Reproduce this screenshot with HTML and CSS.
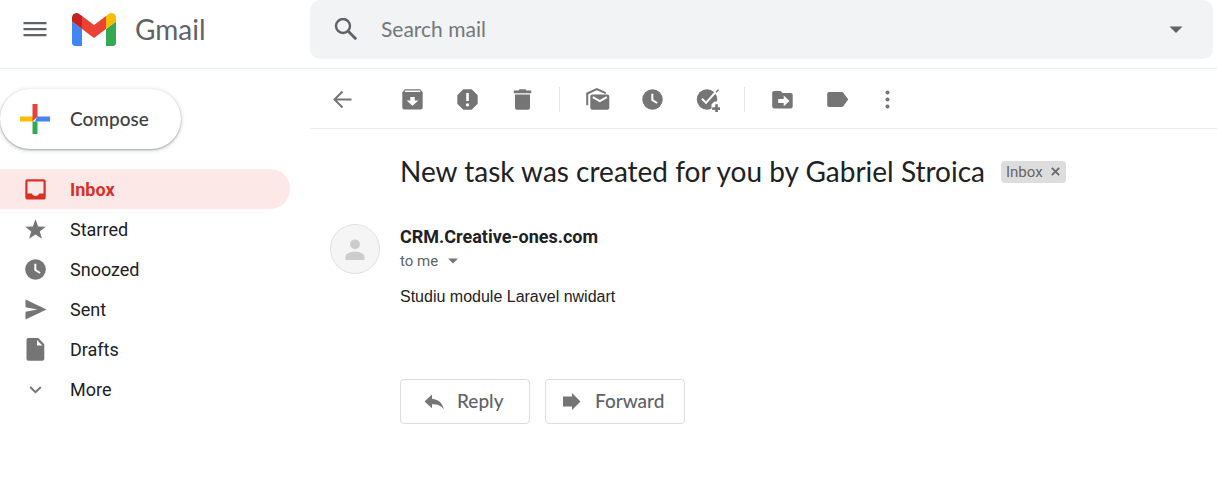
FILE: index.html
```html
<!DOCTYPE html>
<html lang="en">
<head>
  <meta charset="UTF-8" />
  <meta name="viewport" content="width=device-width, initial-scale=1.0"/>
  <title>Gmail</title>
  <link rel="stylesheet" href="styles.css">
</head>
<body>

  <header class="header">
    <div class="brand">
      <button class="menu-btn" aria-label="Main menu">
        <svg width="24" height="15" viewBox="0 0 24 15"><path d="M0.500 0h23v2.300h-23zM0.500 6h23v2.300h-23zM0.500 12h23v2.300h-23z"/></svg>
      </button>
      <a href="#" class="logo">
        <svg width="44" height="33" viewBox="52 42 88 66">
          <path fill="#4285f4" d="M58 108h14V74L52 59v43c0 3.320 2.690 6 6 6"/>
          <path fill="#34a853" d="M120 108h14c3.320 0 6-2.690 6-6V59l-20 15"/>
          <path fill="#fbbc04" d="M120 48v26l20-15v-8c0-7.420-8.470-11.650-14.400-7.200"/>
          <path fill="#ea4335" d="M72 74V48l24 18 24-18v26L96 92"/>
          <path fill="#c5221f" d="M52 51v8l20 15V48l-5.600-4.200c-5.940-4.450-14.400-.220-14.400 7.200"/>
        </svg>
        <span class="logo-text">Gmail</span>
      </a>
    </div>
    <form class="search">
      <button type="button" class="search-btn" aria-label="Search">
        <svg width="24" height="24" viewBox="0 0 24 24"><circle cx="9" cy="8" r="7" fill="none" stroke="#5f6368" stroke-width="2.400"/><path d="M14 13l8.200 8.200" fill="none" stroke="#5f6368" stroke-width="2.800"/></svg>
      </button>
      <input type="text" class="search-input" placeholder="Search mail" aria-label="Search mail">
      <button type="button" class="options-btn" aria-label="Search options">
        <svg width="14" height="8" viewBox="0 0 14 8"><path d="M0.500 0.500h13l-6.500 6.500z"/></svg>
      </button>
    </form>
  </header>

  <div class="layout">
    <aside class="sidebar">
      <button class="compose">
        <svg width="30" height="30" viewBox="0 0 30 30">
          <path fill="#fbbc04" d="M0 12.500h13v5H0z"/>
          <path fill="#4285f4" d="M17 12.500h13v5H15z"/>
          <path fill="#34a853" d="M12.500 17.500h5V30h-5z"/>
          <path fill="#ea4335" d="M12.500 0h5v12.500l-5 5z"/>
        </svg>
        <span class="btn-text">Compose</span>
      </button>
      <nav class="nav">
        <a href="#" class="nav-item active">
          <svg class="icon" viewBox="0 0 25 25"><path fill-rule="evenodd" d="M4.500 2.200h16a2.200 2.200 0 0 1 2.200 2.200v16a2.200 2.200 0 0 1-2.200 2.200h-16a2.200 2.200 0 0 1-2.200-2.200v-16a2.200 2.200 0 0 1 2.200-2.200zM4.500 4.400v12.100h4.300c.500 1.500 1.900 2.500 3.700 2.500s3.200-1 3.700-2.500h4.300V4.400z"/></svg>
          Inbox
        </a>
        <a href="#" class="nav-item">
          <svg class="icon" viewBox="0 0 25 25"><path d="M12.500 2.200l2.700 7.200 7.500.300-5.900 4.700 2.100 7.400-6.400-4.300-6.400 4.300 2.100-7.400-5.900-4.700 7.500-.300z"/></svg>
          Starred
        </a>
        <a href="#" class="nav-item">
          <svg class="icon" viewBox="0 0 25 25"><circle cx="12.500" cy="12.500" r="10.300"/><path class="cut-line" d="M12.300 6.800v6.200l4.800 3"/></svg>
          Snoozed
        </a>
        <a href="#" class="nav-item">
          <svg class="icon" viewBox="0 0 25 25"><path d="M2.500 2.600L23.500 12.500 2.500 22.500v-7.700l12-2.300-12-2.300z"/></svg>
          Sent
        </a>
        <a href="#" class="nav-item">
          <svg class="icon" viewBox="0 0 25 25"><path fill-rule="evenodd" d="M5.500 1h9.800l6 6.300v14.500a2 2 0 0 1-2 2H5.500a2 2 0 0 1-2-2V3a2 2 0 0 1 2-2zM14 3v5.500h5.300z"/></svg>
          Drafts
        </a>
        <a href="#" class="nav-item">
          <svg class="icon" viewBox="0 0 25 25"><path class="line" d="M7.200 10l5.300 5.200 5.300-5.200"/></svg>
          More
        </a>
      </nav>
    </aside>

    <main class="main">
      <div class="toolbar">
        <button class="tool back" aria-label="Back to Inbox">
          <svg class="icon" viewBox="0 0 25 25"><path class="line" d="M21.500 12.500H5.500M12.500 4.500l-8 8 8 8"/></svg>
        </button>
        <button class="tool" aria-label="Archive">
          <svg class="icon" viewBox="0 0 25 25"><path fill-rule="evenodd" d="M5 2.200h15l2.700 3v15.300a2 2 0 0 1-2 2H4.300a2 2 0 0 1-2-2V5.200zM5.300 3.600l-.8 1.300h16l-.8-1.300zM10.300 10v3.500H6.600l5.900 5.200 5.900-5.200h-3.700V10z"/></svg>
        </button>
        <button class="tool" aria-label="Report spam">
          <svg class="icon" viewBox="0 0 25 25"><path fill-rule="evenodd" d="M8.300 2.200h8.400l6 6v8.600l-6 6H8.300l-6-6V8.200zM11.200 6v8h2.600V6zM12.500 16.200a1.700 1.700 0 1 0 0 3.400 1.700 1.700 0 0 0 0-3.400z"/></svg>
        </button>
        <button class="tool" aria-label="Delete">
          <svg class="icon" viewBox="0 0 25 25"><path d="M9.500 2.200h6l1 1.300h4.700v2.700H3.800V3.500h4.700zM5 7.500h15v13.200a2 2 0 0 1-2 2H7a2 2 0 0 1-2-2z"/></svg>
        </button>
        <span class="divider"></span>
        <button class="tool" aria-label="Mark as unread">
          <svg class="icon" viewBox="0 0 25 25"><path class="line" d="M2.200 18.200V6.500l9.600-4.400 9 4"/><path d="M7.300 7.400h15a2 2 0 0 1 2 2v11.300a2 2 0 0 1-2 2h-15a2 2 0 0 1-2-2V9.400a2 2 0 0 1 2-2z"/><path class="cut-line" d="M7.800 10.200l7 4 7-4"/></svg>
        </button>
        <button class="tool" aria-label="Snooze">
          <svg class="icon" viewBox="0 0 25 25"><circle cx="12.500" cy="12.500" r="10.200"/><path class="cut-line" d="M12.300 6.800v6.200l4.800 3"/></svg>
        </button>
        <button class="tool" aria-label="Add to Tasks">
          <svg class="icon" viewBox="0 0 25 25"><circle cx="12" cy="12.500" r="10.200"/><path class="cut-line" d="M7 11.800l4 4 11-12.300"/><path d="M20.700 4.600l2.300-2.400 1 1-2.700 2.800z"/><path d="M16.500 17.300l3-2.900h6V25h-9z" fill="#fff"/><path d="M20.200 17.300h2.700v3h2.600V23h-2.600v2h-2.700v-2h-3v-2.700h3z"/></svg>
        </button>
        <span class="divider"></span>
        <button class="tool" aria-label="Move to">
          <svg class="icon" viewBox="0 0 25 25"><path fill-rule="evenodd" d="M4.200 4h6.300l2 2h8.200a2 2 0 0 1 2 2v11.500a2 2 0 0 1-2 2H4.200a2 2 0 0 1-2-2V6a2 2 0 0 1 2-2zM8.200 12v4h5.500v3.300l5.800-5.400-5.800-5.400V12z"/></svg>
        </button>
        <button class="tool" aria-label="Labels">
          <svg class="icon" viewBox="0 0 25 25"><path d="M4.200 5h12.500c.8 0 1.400.3 1.800.9l4.700 6.600-4.700 6.600c-.4.600-1 .9-1.800.9H4.200a2 2 0 0 1-2-2V7a2 2 0 0 1 2-2z"/></svg>
        </button>
        <button class="tool more" aria-label="More">
          <svg class="icon" viewBox="0 0 25 25"><circle cx="12.500" cy="5.500" r="2"/><circle cx="12.500" cy="12.500" r="2"/><circle cx="12.500" cy="19.500" r="2"/></svg>
        </button>
      </div>

      <article class="message">
        <div class="subject-row">
          <h1 class="subject">New task was created for you by Gabriel Stroica</h1>
          <span class="label">Inbox
            <button class="label-remove" aria-label="Remove label Inbox">
              <svg width="9" height="9" viewBox="0 0 9 9"><path d="M0.800 0.800l7.400 7.400M8.200 0.800L0.800 8.200" stroke="#666" stroke-width="1.700"/></svg>
            </button>
          </span>
        </div>

        <div class="mail">
          <svg class="avatar" viewBox="0 0 50 50"><circle cx="25" cy="25" r="24.500" fill="#f5f5f5" stroke="#e0e0e0"/><circle cx="25" cy="20.300" r="4.900" fill="#ccc"/><path fill="#ccc" d="M15.500 36v-3c0-3.500 5-5.200 9.500-5.200s9.500 1.700 9.500 5.200v3z"/></svg>
          <div class="mail-content">
            <h2 class="sender">CRM.Creative-ones.com</h2>
            <button class="recipient">to me
              <svg width="10" height="6" viewBox="0 0 10 6"><path d="M0 0.500h10l-5 5z"/></svg>
            </button>
            <p class="body-text">Studiu module Laravel nwidart</p>
            <div class="actions">
              <button class="action reply">
                <svg width="20" height="17" viewBox="0 0 20 17"><path d="M8 1.500v4.200c7 .8 10.500 4.500 11.800 10.500-2.800-3.800-6.300-5-11.800-5v4L0.500 8.500z"/></svg>
                <span class="btn-text">Reply</span>
              </button>
              <button class="action forward">
                <svg width="20" height="17" viewBox="0 0 20 17"><path d="M1 3.500h9V0l8.500 8.500L10 17v-3.500H1z"/></svg>
                <span class="btn-text">Forward</span>
              </button>
            </div>
          </div>
        </div>
      </article>
    </main>
  </div>

</body>
</html>
```
FILE: styles.css
```css
* {
  box-sizing: border-box;
  margin: 0;
  padding: 0;
}

body {
  background-color: #fff;
  color: #202124;
  font-family: Roboto, sans-serif;
}

button {
  border: none;
  background: none;
  cursor: pointer;
  font-family: inherit;
}

a {
  text-decoration: none;
}

svg {
  display: block;
  flex: none;
}

.header {
  display: flex;
  height: 69px;
  padding-right: 4px;
  border-bottom: 1px solid #e9eef1;
}

.brand {
  width: 310px;
  height: 59px;
  display: flex;
  align-items: center;
  padding-left: 23px;
  gap: 25px;
}

.menu-btn svg,
.options-btn svg {
  fill: #5f6368;
}

.logo {
  display: flex;
  align-items: center;
  gap: 19px;
}

.logo-text {
  padding-bottom: 2px;
  font-family: Lato, sans-serif;
  font-size: 28px;
  line-height: 32px;
  color: #5f6368;
}

.btn-text {
  padding-bottom: 2px;
}

.search {
  flex: 1;
  height: 59px;
  display: flex;
  align-items: center;
  padding: 0 30px 0 24px;
  background-color: #f1f3f4;
  border-radius: 10px;
}

.search-input {
  flex: 1;
  margin-left: 23px;
  padding-bottom: 3px;
  border: none;
  outline: none;
  background: none;
  font-family: Lato, sans-serif;
  font-size: 21px;
}

.search-input::placeholder {
  color: #74777b;
}

.layout {
  display: flex;
}

.sidebar {
  width: 310px;
  padding: 20px 20px 0 0;
}

.compose {
  width: 181px;
  height: 60px;
  display: flex;
  align-items: center;
  padding-left: 20px;
  gap: 20px;
  border-radius: 30px;
  box-shadow: 0 1px 2px rgba(60, 64, 67, 0.4), 0 1px 4px 1px rgba(60, 64, 67, 0.15);
  font-family: Lato, sans-serif;
  font-size: 19px;
  font-weight: 500;
  color: #3c4043;
}

.nav {
  margin-top: 20px;
}

.nav-item {
  height: 40px;
  display: flex;
  align-items: center;
  padding-left: 23px;
  gap: 22px;
  border-radius: 0 20px 20px 0;
  font-size: 18px;
  color: #202124;
}

.nav-item.active {
  background-color: #fce8e6;
  color: #d93025;
  font-weight: bold;
}

.icon {
  width: 25px;
  height: 25px;
  fill: #757575;
}

.active .icon {
  fill: #d93025;
}

.line {
  fill: none;
  stroke: #757575;
  stroke-width: 2;
}

.cut-line {
  fill: none;
  stroke: #fff;
  stroke-width: 2;
}

.main {
  flex: 1;
}

.toolbar {
  height: 60px;
  display: flex;
  align-items: center;
  padding: 2px 0 0 5px;
  border-bottom: 1px solid #e9eef1;
}

.tool {
  width: 55px;
  height: 50px;
  display: flex;
  align-items: center;
  justify-content: center;
}

.back {
  margin-right: 15px;
}

.more {
  width: 45px;
}

.divider {
  width: 1px;
  height: 25px;
  margin: 0 10px 0 9px;
  background-color: #e3e7ea;
}

.message {
  padding: 25px 20px;
}

.subject-row {
  display: flex;
  align-items: center;
  padding-left: 70px;
  gap: 16px;
}

.subject {
  font-family: Lato, sans-serif;
  font-size: 28px;
  line-height: 35px;
  font-weight: 400;
}

.label {
  height: 22px;
  display: flex;
  align-items: center;
  padding: 0 6px 0 5px;
  gap: 8px;
  border-radius: 4px;
  background-color: #ddd;
  font-size: 15px;
  color: #666;
}

.mail {
  display: flex;
  align-items: flex-start;
  margin-top: 35px;
  gap: 20px;
}

.avatar {
  width: 50px;
  height: 50px;
}

.sender {
  font-size: 18px;
  line-height: 26px;
}

.recipient {
  display: flex;
  align-items: center;
  gap: 10px;
  font-size: 15px;
  line-height: 22px;
  color: #5f6368;
  fill: #757575;
}

.body-text {
  margin-top: 13px;
  font-family: "Liberation Sans", Arial, sans-serif;
  font-size: 16px;
  line-height: 24px;
  color: #222;
}

.actions {
  display: flex;
  margin-top: 70px;
  gap: 15px;
}

.action {
  height: 45px;
  display: flex;
  align-items: center;
  border: 1px solid #dadce0;
  border-radius: 4px;
  font-family: Lato, sans-serif;
  font-size: 19px;
  font-weight: 500;
  color: #5f6368;
  fill: #757575;
}

.reply {
  width: 130px;
  padding-left: 23px;
  gap: 13px;
}

.forward {
  width: 140px;
  padding-left: 16px;
  gap: 13px;
}
```
